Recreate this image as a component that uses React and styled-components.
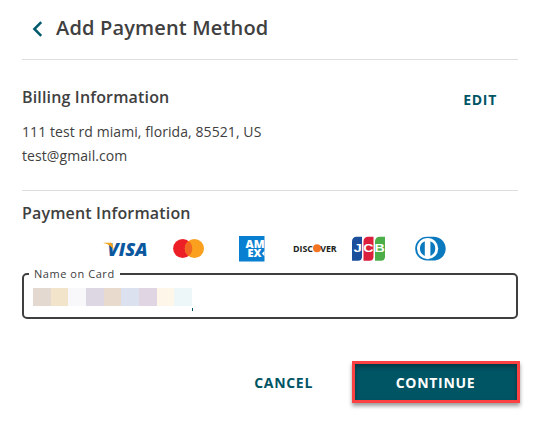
import styled, { createGlobalStyle } from "styled-components";

const blurredName = [
  { color: "#e3d9d0", width: 18 },
  { color: "#f2e4cb", width: 17 },
  { color: "#f8f8fb", width: 18 },
  { color: "#ddd6e3", width: 18 },
  { color: "#e8dacd", width: 17 },
  { color: "#dbe1ef", width: 18 },
  { color: "#e0d5e3", width: 18 },
  { color: "#fef6e8", width: 17 },
  { color: "#edf6f9", width: 18 },
];

export default function App() {
  return (
    <>
      <GlobalStyle />
      <Page>
        <Header>
          <BackButton type="button" aria-label="Back">
            <svg width="11" height="16" viewBox="0 0 11 16">
              <path d="M9.2 1.2 2.4 8l6.8 6.8" fill="none" stroke="#005a6b" strokeWidth="2.5" />
            </svg>
          </BackButton>
          <Title>Add Payment Method</Title>
        </Header>

        <Billing>
          <div>
            <SectionTitle>Billing Information</SectionTitle>
            <Address>
              <AddressLine>111 test rd miami, florida, 85521, US</AddressLine>
              <AddressLine>test@gmail.com</AddressLine>
            </Address>
          </div>
          <EditButton type="button">EDIT</EditButton>
        </Billing>

        <Payment>
          <SectionTitle>Payment Information</SectionTitle>
          <CardLogos>
            <Visa />
            <Mastercard />
            <Amex />
            <Discover />
            <Jcb />
            <Diners />
          </CardLogos>
          <Field>
            <FieldLabel>Name on Card</FieldLabel>
            <NameBlocks>
              {blurredName.map((block) => (
                <NameBlock key={block.color} $color={block.color} $width={block.width} />
              ))}
              <Caret />
            </NameBlocks>
          </Field>
        </Payment>

        <Actions>
          <CancelButton type="button">CANCEL</CancelButton>
          <ContinueButton type="button">CONTINUE</ContinueButton>
        </Actions>
      </Page>
    </>
  );
}

function Visa() {
  return (
    <Logo width="45" height="28" viewBox="0 0 45 28">
      <LogoText x="4.5" y="21.7" fontSize="17.8" fill="#0b589f" textLength="40" lengthAdjust="spacingAndGlyphs" $italic>
        VISA
      </LogoText>
      <path d="M0.5 8.7h6.8c1.3 0 2 .5 2.3 1.7l1.2 5.8C9 12.5 5.5 10 0.5 9Z" fill="#f6a31c" />
    </Logo>
  );
}

function Mastercard() {
  return (
    <Logo width="31" height="28" viewBox="0 0 31 28" $offset={25}>
      <circle cx="9.7" cy="14.5" r="9.6" fill="#ec1f27" />
      <circle cx="21.4" cy="14.5" r="9.6" fill="#faa01e" />
      <path d="M15.55 6.9a9.6 9.6 0 0 1 0 15.2a9.6 9.6 0 0 1 0-15.2Z" fill="#f26722" />
    </Logo>
  );
}

function Amex() {
  return (
    <Logo width="26" height="28" viewBox="0 0 26 28" $offset={35}>
      <rect y="2" width="25.500" height="25.5" fill="#087fd0" />
      <LogoText x="6.5" y="13.8" fontSize="10" fill="#fff" textLength="19" lengthAdjust="spacingAndGlyphs">
        AM
      </LogoText>
      <LogoText x="8.5" y="23" fontSize="10" fill="#fff" textLength="14" lengthAdjust="spacingAndGlyphs">
        EX
      </LogoText>
      <path d="m25.5 16.8-2.6 2.700 2.600 2.700Z" fill="#fff" />
    </Logo>
  );
}

function Discover() {
  return (
    <Logo width="44" height="28" viewBox="0 0 44 28" $offset={28}>
      <DiscoverText x="0" y="17.6" fontSize="9.3" fill="#231f20" textLength="20" lengthAdjust="spacingAndGlyphs">
        DISC
      </DiscoverText>
      <circle cx="24" cy="14.2" r="4" fill="#f47521" />
      <DiscoverText x="27.2" y="17.6" fontSize="9.3" fill="#231f20" textLength="16.5" lengthAdjust="spacingAndGlyphs">
        VER
      </DiscoverText>
    </Logo>
  );
}

function Jcb() {
  return (
    <Logo width="33" height="28" viewBox="0 0 33 28" $offset={15}>
      <path d="M4.5 2.7H10v20.5a4 4 0 0 1-4 3.5H0V7.2a4.5 4.5 0 0 1 4.5-4.500Z" fill="#1b4f9c" />
      <path d="M16 2.7h5.5v20.5a4 4 0 0 1-4 3.5h-6V7.2a4.5 4.5 0 0 1 4.5-4.500Z" fill="#dc1f3d" />
      <path d="M27.5 2.7H33v20.5a4 4 0 0 1-4 3.5h-6V7.2a4.5 4.5 0 0 1 4.5-4.500Z" fill="#4cae48" />
      <JcbText x="1.5" y="17.9" fontSize="10" fill="#fff" textLength="8.5" lengthAdjust="spacingAndGlyphs">
        J
      </JcbText>
      <JcbText x="11.3" y="17.9" fontSize="10" fill="#fff" textLength="10.3" lengthAdjust="spacingAndGlyphs">
        C
      </JcbText>
      <JcbText x="22.4" y="17.9" fontSize="10" fill="#fff" textLength="10.3" lengthAdjust="spacingAndGlyphs">
        B
      </JcbText>
    </Logo>
  );
}

function Diners() {
  return (
    <Logo width="31" height="28" viewBox="0 0 31 28" $offset={30}>
      <path d="M12 2.8h6.5C25.5 2.8 30.7 8 30.7 14.600s-5.2 11.9-12.2 11.9H12A11.85 11.85 0 0 1 12 2.8Z" fill="#0a79bd" />
      <circle cx="12.6" cy="14.6" r="10.6" fill="#fff" />
      <path d="M9.8 7.3v14.600a7.9 7.900 0 0 1 0-14.600ZM15.4 7.300v14.600a7.900 7.900 0 0 0 0-14.600Z" fill="#0a79bd" />
    </Logo>
  );
}

const GlobalStyle = createGlobalStyle`
  * {
    box-sizing: border-box;
  }

  body {
    margin: 0;
    background: #fff;
    color: #404040;
    font-family: "Open Sans", sans-serif;
  }

  button {
    font-family: inherit;
    border: none;
    padding: 0;
    background: none;
    cursor: pointer;
  }
`;

const Page = styled.main`
  height: 422px;
  padding: 0 21px 0 22px;
  overflow: hidden;
`;

const Header = styled.header`
  display: flex;
  align-items: center;
  height: 60px;
  padding: 0 0 4px 10px;
  border-bottom: 1px solid #dedede;
`;

const BackButton = styled.button`
  display: flex;
  width: 24px;
  padding-top: 2px;
`;

const Title = styled.h1`
  margin: 0;
  font-size: 20px;
  font-weight: 580;
  line-height: 28px;
  letter-spacing: 0.16px;
`;

const SectionTitle = styled.h2`
  margin: 0;
  font-size: 16px;
  font-weight: 580;
  line-height: 24px;
  letter-spacing: 0.16px;
`;

const Billing = styled.section`
  display: flex;
  justify-content: space-between;
  align-items: flex-start;
  height: 131px;
  padding-top: 25px;
  border-bottom: 1px solid #dedede;
`;

const Address = styled.div`
  margin-top: 11px;
`;

const AddressLine = styled.p`
  margin: 0;
  font-size: 14px;
  line-height: 24px;
  letter-spacing: 0.08px;
`;

const TextButton = styled.button`
  color: #005565;
  font-size: 14px;
  font-weight: 700;
  line-height: 20px;
  letter-spacing: 0.7px;
`;

const EditButton = styled(TextButton)`
  margin: 5px 21px 0 0;
`;

const Payment = styled.section`
  padding-top: 10px;
`;

const CardLogos = styled.div`
  display: flex;
  height: 28px;
  margin: 9px 0 0 81px;
`;

const Logo = styled.svg`
  flex: none;
  margin-left: ${({ $offset = 0 }) => $offset}px;
`;

const LogoText = styled.text`
  font-family: "Open Sans", sans-serif;
  font-weight: 800;
  font-style: ${({ $italic }) => ($italic ? "italic" : "normal")};
`;

const DiscoverText = styled(LogoText)`
  font-weight: 700;
`;

const JcbText = styled(LogoText)`
  font-family: "Liberation Sans", sans-serif;
  font-weight: 700;
`;

const Field = styled.fieldset`
  min-width: 0;
  height: 54px;
  margin: 3px 0 0;
  padding: 0 0 0 9px;
  border: 2px solid #3f3f3f;
  border-radius: 5px;
`;

const FieldLabel = styled.legend`
  margin-left: -4px;
  padding: 0 5px;
  font-size: 11px;
  line-height: 18px;
  letter-spacing: 0.55px;
`;

const NameBlocks = styled.div`
  display: flex;
  margin-top: 5px;
`;

const NameBlock = styled.span`
  width: ${({ $width }) => $width}px;
  height: 18px;
  background: ${({ $color }) => $color};
`;

const Caret = styled.span`
  width: 1px;
  height: 3px;
  margin-top: 20px;
  background: #005565;
`;

const Actions = styled.div`
  display: flex;
  justify-content: flex-end;
  align-items: center;
  margin-top: 42px;
`;

const CancelButton = styled(TextButton)`
  margin: 1px 39px 0 0;
`;

const ContinueButton = styled(TextButton)`
  width: 168px;
  height: 42px;
  margin-right: -2px;
  padding: 2px 1px 0 0;
  border: 3px solid #fc4143;
  background: #005565;
  color: #fff;
  box-shadow: 0 3px 4px rgba(0, 0, 0, 0.4), inset 0 3px 5px rgba(0, 0, 0, 0.35);
`;
